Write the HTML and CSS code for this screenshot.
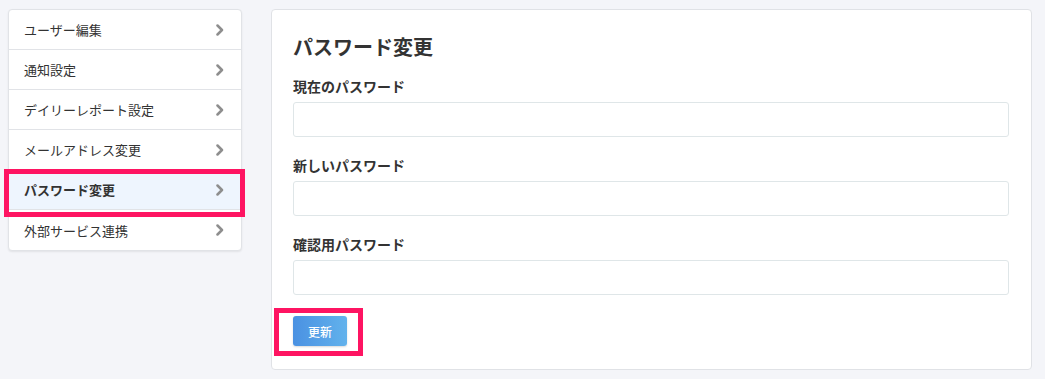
FILE: index.html
```html
<!DOCTYPE html>
<html lang="ja">
<head>
<meta charset="utf-8">
<title>パスワード変更</title>
<link rel="stylesheet" href="styles.css">
</head>
<body>
<div class="layout">
  <nav class="side">
    <a class="side-item">ユーザー編集<svg class="chev" viewBox="0 0 8 12"><polyline points="1.5,1.5 6,6 1.5,10.5"/></svg></a>
    <a class="side-item">通知設定<svg class="chev" viewBox="0 0 8 12"><polyline points="1.5,1.5 6,6 1.5,10.5"/></svg></a>
    <a class="side-item">デイリーレポート設定<svg class="chev" viewBox="0 0 8 12"><polyline points="1.5,1.5 6,6 1.5,10.5"/></svg></a>
    <a class="side-item">メールアドレス変更<svg class="chev" viewBox="0 0 8 12"><polyline points="1.5,1.5 6,6 1.5,10.5"/></svg></a>
    <a class="side-item active">パスワード変更<svg class="chev" viewBox="0 0 8 12"><polyline points="1.5,1.5 6,6 1.5,10.5"/></svg><span class="mark mark-side"></span></a>
    <a class="side-item last">外部サービス連携<svg class="chev" viewBox="0 0 8 12"><polyline points="1.5,1.5 6,6 1.5,10.5"/></svg></a>
  </nav>
  <main class="card">
    <h1 class="title">パスワード変更</h1>
    <div class="field">
      <label class="label">現在のパスワード</label>
      <input class="input" type="password">
    </div>
    <div class="field">
      <label class="label">新しいパスワード</label>
      <input class="input" type="password">
    </div>
    <div class="field">
      <label class="label">確認用パスワード</label>
      <input class="input" type="password">
    </div>
    <div class="actions">
      <button class="btn">更新</button>
      <span class="mark mark-btn"></span>
    </div>
  </main>
</div>
</body>
</html>
```
FILE: styles.css
```css
* { box-sizing: border-box; }
html, body { margin: 0; padding: 0; }
body {
  background: #f4f5f9;
  font-family: "Noto Sans CJK JP", "Noto Sans", sans-serif;
  color: #333;
}
.layout {
  display: flex;
  align-items: flex-start;
  gap: 29px;
  padding: 10px 13px 0 8px;
}
.side {
  width: 234px;
  flex: none;
  background: #fff;
  border: 1px solid #e1e3e7;
  border-radius: 4px;
  box-shadow: 0 1px 2px rgba(0,0,0,0.08);
  display: flex;
  flex-direction: column;
  margin-top: -1px;
}
.side-item {
  position: relative;
  display: flex;
  align-items: center;
  justify-content: space-between;
  height: 40px;
  padding: 0 17px 0 15px;
  border-bottom: 1px solid #e1e3e7;
  font-size: 13px;
  color: #333;
}
.side-item.last { border-bottom: none; }
.side-item.active {
  background: #eef5fe;
  font-weight: bold;
}
.chev {
  width: 8px;
  height: 12px;
  fill: none;
  stroke: #8e8e8e;
  stroke-width: 2.5;
  stroke-linecap: round;
  stroke-linejoin: round;
}
.mark {
  position: absolute;
  border: 5px solid #fe1462;
  pointer-events: none;
}
.mark-side {
  left: -5px;
  top: -1px;
  width: 241px;
  height: 48px;
}
.card {
  flex: 1;
  background: #fff;
  border: 1px solid #e0e2e6;
  border-radius: 4px;
  padding: 23px 22px 22px 21px;
  margin-top: -1px;
  height: 361px;
}
.title {
  margin: 0 0 15px;
  font-size: 20px;
  line-height: 28px;
  font-weight: bold;
  color: #333;
}
.field {
  display: flex;
  flex-direction: column;
  margin-bottom: 18px;
}
.label {
  font-size: 14px;
  line-height: 20px;
  font-weight: bold;
  color: #333;
  margin-bottom: 6px;
}
.input {
  height: 35px;
  border: 1px solid #dfe6e8;
  border-radius: 3px;
  background: #fff;
  font-size: 14px;
  padding: 0 10px;
}
.actions {
  position: relative;
  padding-top: 3px;
}
.btn {
  width: 54px;
  height: 30px;
  border: none;
  border-radius: 3px;
  background: linear-gradient(90deg, #4a91e2, #62b2ec);
  box-shadow: 0 1px 2px rgba(0,0,0,0.15);
  color: #fff;
  font-family: "Noto Sans CJK JP", sans-serif;
  font-size: 12px;
  font-weight: 500;
  padding: 0;
}
.mark-btn {
  left: -19px;
  top: -5px;
  width: 89px;
  height: 48px;
}
```
